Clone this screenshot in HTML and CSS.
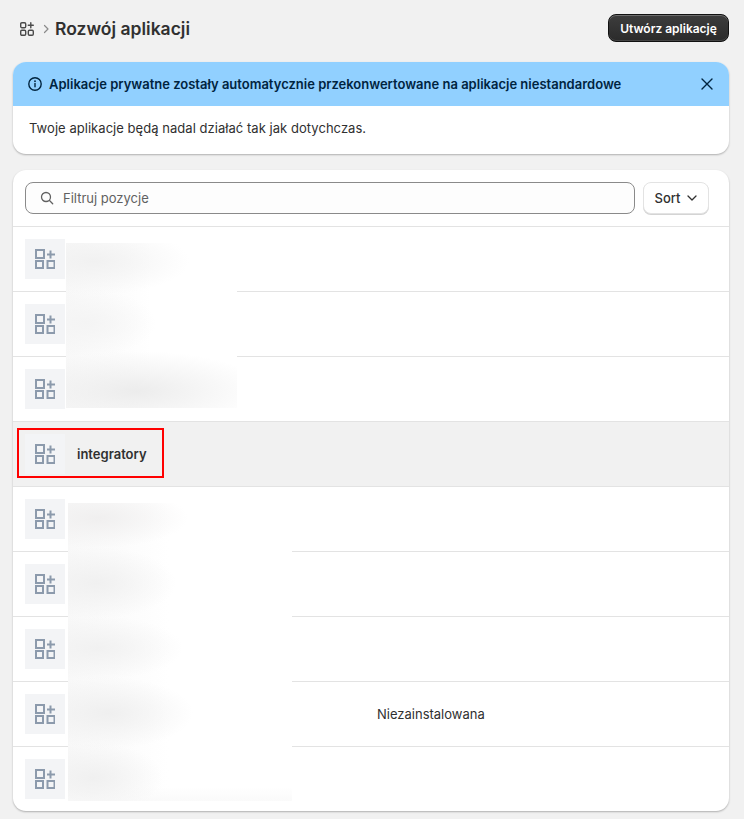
FILE: index.html
```html
<!DOCTYPE html>
<html lang="pl">
<head>
<meta charset="utf-8">
<title>Rozwój aplikacji</title>
<link rel="stylesheet" href="styles.css">
</head>
<body>
<svg class="defs" width="0" height="0" aria-hidden="true">
  <symbol id="apps" viewBox="0 0 20 20">
    <path fill="none" stroke="currentColor" stroke-width="2" d="M1 1h8v8H1zM1 12h7v7H1zM12.500 12h7v7h-7z"/>
    <path fill="none" stroke="currentColor" stroke-width="2" d="M15.500 1.500v8M12 5.500h8"/>
  </symbol>
</svg>
<main class="page">
  <header class="top">
    <div class="crumbs">
      <svg class="crumb-icon" viewBox="0 0 14 14"><g fill="none" stroke="currentColor" stroke-width="1.400"><rect x=".7" y=".7" width="5" height="5" rx="1.200"/><rect x=".7" y="8.300" width="5" height="5" rx="1.200"/><rect x="8.300" y="8.300" width="5" height="5" rx="1.200"/><path stroke-linecap="round" d="M10.800.7v5M8.300 3.200h5"/></g></svg>
      <svg class="crumb-sep" viewBox="0 0 8 10"><path fill="none" stroke="currentColor" stroke-width="1.200" stroke-linecap="round" stroke-linejoin="round" d="M2.500 1.500 6 5 2.500 8.500"/></svg>
      <h1 class="title">Rozwój aplikacji</h1>
    </div>
    <button class="primary">Utwórz aplikację</button>
  </header>

  <section class="banner">
    <div class="banner-head">
      <svg class="info" viewBox="0 0 14 14"><circle cx="7" cy="7" r="6.200" fill="none" stroke="currentColor" stroke-width="1.400"/><path fill="none" stroke="currentColor" stroke-width="1.400" stroke-linecap="round" d="M7 6.500v3.300"/><circle cx="7" cy="4.200" r=".9" fill="currentColor"/></svg>
      <strong class="banner-title">Aplikacje prywatne zostały automatycznie przekonwertowane na aplikacje niestandardowe</strong>
      <svg class="close" viewBox="0 0 12 12"><path fill="none" stroke="currentColor" stroke-width="1.400" stroke-linecap="round" d="M1 1l10 10M11 1 1 11"/></svg>
    </div>
    <p class="banner-body">Twoje aplikacje będą nadal działać tak jak dotychczas.</p>
  </section>

  <section class="card">
    <div class="filters">
      <label class="search">
        <svg class="search-icon" viewBox="0 0 14 14"><circle cx="6" cy="6" r="4.500" fill="none" stroke="currentColor" stroke-width="1.300"/><path fill="none" stroke="currentColor" stroke-width="1.300" stroke-linecap="round" d="m9.500 9.500 3.200 3.200"/></svg>
        <span>Filtruj pozycje</span>
      </label>
      <button class="sort">Sort <svg class="chev" viewBox="0 0 10 6"><path fill="none" stroke="currentColor" stroke-width="1.300" stroke-linecap="round" stroke-linejoin="round" d="m1 1 4 4 4-4"/></svg></button>
    </div>
    <ul class="list">
      <li class="row"><span class="thumb"><svg class="app"><use href="#apps"/></svg></span></li>
      <li class="row"><span class="thumb"><svg class="app"><use href="#apps"/></svg></span></li>
      <li class="row"><span class="thumb"><svg class="app"><use href="#apps"/></svg></span></li>
      <li class="row row-active"><span class="thumb"><svg class="app"><use href="#apps"/></svg></span><span class="name">integratory</span></li>
      <li class="row"><span class="thumb"><svg class="app"><use href="#apps"/></svg></span></li>
      <li class="row"><span class="thumb"><svg class="app"><use href="#apps"/></svg></span></li>
      <li class="row"><span class="thumb"><svg class="app"><use href="#apps"/></svg></span></li>
      <li class="row"><span class="thumb"><svg class="app"><use href="#apps"/></svg></span><span class="status">Niezainstalowana</span></li>
      <li class="row"><span class="thumb"><svg class="app"><use href="#apps"/></svg></span></li>
    </ul>
    <div class="redact redact-a"></div>
    <div class="redact redact-b"></div>
    <div class="marker"></div>
  </section>
</main>
</body>
</html>
```
FILE: styles.css
```css
* { box-sizing: border-box; }
html, body { margin: 0; padding: 0; }
body {
  background: #f1f1f1;
  color: #303030;
  font-family: Inter, "Liberation Sans", sans-serif;
  font-size: 13px;
  height: 819px;
  overflow: hidden;
}
.defs { position: absolute; }
.page { padding: 14px 15px 0 13px; }
.top {
  display: flex;
  align-items: center;
  justify-content: space-between;
  height: 28px;
  margin-bottom: 20px;
}
.crumbs { display: flex; align-items: center; padding: 1px 0 0 7px; }
.crumb-icon { width: 14px; height: 14px; color: #4a4a4a; }
.crumb-sep { width: 8px; height: 10px; margin: 0 5px 0 8px; color: #8a8a8a; }
.title { margin: 0; font-size: 17.500px; font-weight: 600; line-height: 28px; color: #303030; }
.primary {
  width: 121px;
  height: 28px;
  border: 1px solid #111;
  border-radius: 8px;
  background: linear-gradient(#3d3d3d, #2b2b2b);
  box-shadow: inset 0 1px 0 rgba(255,255,255,.25), inset 0 -1px 0 rgba(255,255,255,.12);
  color: #fff;
  font: 600 12px Inter, sans-serif;
  padding: 0;
}
.banner {
  border-radius: 13px;
  background: #fff;
  overflow: hidden;
  box-shadow: 0 1px 2px rgba(0,0,0,.28);
  margin-bottom: 16px;
  height: 92px;
}
.banner-head {
  display: flex;
  align-items: center;
  height: 44px;
  background: #91d0ff;
  padding: 0 15px;
  color: #00243f;
}
.info { width: 14px; height: 14px; flex: none; margin-right: 7px; }
.banner-title { flex: 1; font-size: 13px; font-weight: 600; }
.close { width: 12px; height: 12px; flex: none; margin-right: 1px; }
.banner-body { margin: 0; padding: 12px 16px; line-height: 20px; font-size: 13px; letter-spacing: .04px; }
.card {
  position: relative;
  background: #fff;
  border-radius: 13px;
  box-shadow: 0 1px 2px rgba(0,0,0,.28);
  overflow: hidden;
  height: 641px;
}
.filters {
  display: flex;
  align-items: center;
  gap: 8px;
  height: 56px;
  padding: 0 20px 0 12px;
}
.search {
  flex: 1;
  display: flex;
  align-items: center;
  height: 32px;
  border: 1px solid #8a8a8a;
  border-radius: 8px;
  padding: 0 14px;
  color: #616161;
  background: #fdfdfd;
}
.search-icon { width: 14px; height: 14px; margin-right: 9px; }
.sort {
  display: flex;
  align-items: center;
  justify-content: center;
  gap: 7px;
  width: 66px;
  height: 32px;
  border: 1px solid #e3e3e3;
  border-radius: 8px;
  background: #fff;
  box-shadow: 0 1px 0 #d4d4d4;
  color: #303030;
  font: 500 13px Inter, sans-serif;
  padding: 0;
}
.chev { width: 10px; height: 6px; }
.list { list-style: none; margin: 0; padding: 0; }
.row {
  display: flex;
  align-items: center;
  height: 65px;
  padding: 0 12px;
  border-top: 1px solid #e3e3e3;
}
.row-active { background: #f1f1f1; }
.thumb {
  display: flex;
  align-items: center;
  justify-content: center;
  width: 40px;
  height: 40px;
  flex: none;
  background: #f3f4f6;
}
.app { width: 20px; height: 20px; color: #8c9aac; }
.name { margin-left: 12px; font-weight: 600; color: #303030; }
.status { margin-left: 312px; }
.redact { position: absolute; }
.redact-a {
  left: 53px;
  top: 73px;
  width: 171px;
  height: 165px;
  background:
    radial-gradient(ellipse 95px 34px at 28px 18px, #f1f1f1, rgba(255,255,255,0)),
    radial-gradient(ellipse 70px 34px at 20px 80px, #f4f4f4, rgba(255,255,255,0)),
    radial-gradient(ellipse 130px 40px at 70px 148px, #ececec, rgba(255,255,255,0)),
    linear-gradient(90deg, #f8f8f8, #fff 50%);
}
.redact-b {
  left: 55px;
  top: 333px;
  width: 224px;
  height: 298px;
  background:
    radial-gradient(ellipse 90px 30px at 30px 15px, #f0efef, rgba(255,255,255,0)),
    radial-gradient(ellipse 80px 36px at 28px 80px, #f0f0f0, rgba(255,255,255,0)),
    radial-gradient(ellipse 85px 32px at 30px 145px, #f1f1f1, rgba(255,255,255,0)),
    radial-gradient(ellipse 85px 36px at 40px 210px, #efefef, rgba(255,255,255,0)),
    radial-gradient(ellipse 70px 36px at 25px 275px, #f0f0f0, rgba(255,255,255,0)),
    linear-gradient(0deg, #fafafa, rgba(255,255,255,0) 14px),
    linear-gradient(90deg, #f8f8f8, #fff 45%);
}
.marker {
  position: absolute;
  left: 4px;
  top: 258px;
  width: 147px;
  height: 50px;
  border: 2px solid #f00;
}
```
